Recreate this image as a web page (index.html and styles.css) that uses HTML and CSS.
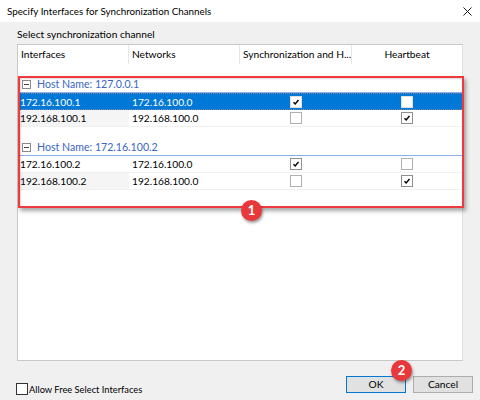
FILE: index.html
```html
<!DOCTYPE html>
<html>
<head>
<meta charset="utf-8">
<link rel="stylesheet" href="styles.css">
</head>
<body>
<div class="titlebar">
  <span class="title">Specify Interfaces for Synchronization Channels</span>
  <svg class="close" viewBox="0 0 9 9" width="9" height="9"><path d="M0.5 0.5L8.5 8.5M8.5 0.5L0.5 8.5" stroke="#222" stroke-width="1" fill="none"/></svg>
</div>
<div class="content">
  <div class="label">Select synchronization channel</div>
  <div class="list">
    <div class="header">
      <div class="hcell">Interfaces</div>
      <div class="hcell">Networks</div>
      <div class="hcell">Synchronization and H...</div>
      <div class="hcell center">Heartbeat</div>
    </div>
    <div class="group">
      <div class="ghead"><span class="toggle"></span><span class="gname">Host Name: 127.0.0.1</span></div>
      <div class="row selected">
        <div class="cell">172.16.100.1</div>
        <div class="cell net">172.16.100.0</div>
        <div class="cell cb"><span class="box checked"><svg viewBox="0 0 12 12"><path d="M3 6.2L5 8.3L9 3.6" stroke="#000" stroke-width="1.7" fill="none"/></svg></span></div>
        <div class="cell cb"><span class="box"></span></div>
      </div>
      <div class="row">
        <div class="cell alt">192.168.100.1</div>
        <div class="cell net">192.168.100.0</div>
        <div class="cell cb"><span class="box"></span></div>
        <div class="cell cb"><span class="box checked"><svg viewBox="0 0 12 12"><path d="M3 6.2L5 8.3L9 3.6" stroke="#000" stroke-width="1.7" fill="none"/></svg></span></div>
      </div>
    </div>
    <div class="group">
      <div class="ghead"><span class="toggle"></span><span class="gname">Host Name: 172.16.100.2</span></div>
      <div class="row">
        <div class="cell">172.16.100.2</div>
        <div class="cell net">172.16.100.0</div>
        <div class="cell cb"><span class="box checked"><svg viewBox="0 0 12 12"><path d="M3 6.2L5 8.3L9 3.6" stroke="#000" stroke-width="1.7" fill="none"/></svg></span></div>
        <div class="cell cb"><span class="box"></span></div>
      </div>
      <div class="row">
        <div class="cell alt">192.168.100.2</div>
        <div class="cell net">192.168.100.0</div>
        <div class="cell cb"><span class="box"></span></div>
        <div class="cell cb"><span class="box checked"><svg viewBox="0 0 12 12"><path d="M3 6.2L5 8.3L9 3.6" stroke="#000" stroke-width="1.7" fill="none"/></svg></span></div>
      </div>
    </div>
  </div>
  <div class="footer">
    <label class="free"><span class="fbox"></span>Allow Free Select Interfaces</label>
    <div class="buttons">
      <button class="btn default">OK</button>
      <button class="btn">Cancel</button>
    </div>
  </div>
</div>
<div class="annot"></div>
<div class="badge b1">1</div>
<div class="badge b2">2</div>
</body>
</html>
```
FILE: styles.css
```css
* { box-sizing: border-box; }
body {
  margin: 0;
  width: 480px;
  height: 400px;
  background: #f0f0f0;
  font-family: Lato, "Noto Sans", sans-serif;
  font-size: 10.2px;
  color: #000;
  position: relative;
  overflow: hidden;
}
.titlebar {
  height: 22px;
  background: #fff;
  display: flex;
  align-items: center;
  justify-content: space-between;
  padding: 0 8px 0 7px;
}
.title { font-size: 9.8px; line-height: 14px; }
.close { display: block; }
.content { padding: 0 17px; }
.label { margin-top: 6px; height: 16px; line-height: 12px; }
.list {
  height: 317px;
  background: #fff;
  border: 1px solid #c8c8c8;
  border-right-color: #e0e0e0;
}
.header, .row {
  display: grid;
  grid-template-columns: 111px 111px 112px 1fr;
}
.header { height: 19px; }
.hcell {
  padding-left: 3px;
  line-height: 19px;
  border-right: 1px solid #e6e6e6;
  white-space: nowrap;
  overflow: hidden;
}
.hcell:last-child { border-right: none; }
.center { text-align: center; padding-left: 0; }
.group { margin-top: 12px; }
.ghead {
  height: 17px;
  display: flex;
  align-items: center;
  border-bottom: 1px solid #8eaee6;
  padding-left: 4px;
}
.toggle {
  width: 9px;
  height: 9px;
  border: 1px solid #8a8a8a;
  position: relative;
  margin-right: 6px;
  background: #fff;
}
.toggle::after {
  content: "";
  position: absolute;
  left: 1px;
  right: 1px;
  top: 3px;
  height: 1px;
  background: #444;
}
.gname { color: #3a66c4; font-size: 10.6px; }
.row {
  height: 17px;
  border-bottom: 1px solid #f0f0f0;
}
.cell {
  line-height: 16px;
  padding-left: 2px;
  white-space: nowrap;
}
.cell.net { padding-left: 3px; }
.cell.alt { background: #f5f5f5; }
.cell.cb {
  display: flex;
  align-items: center;
  justify-content: center;
  padding-left: 0;
}
.box {
  width: 12px;
  height: 12px;
  border: 1px solid #b0b0b0;
  background: #fff;
  display: block;
}
.box.checked { border-color: #8f8f8f; }
.box svg { display: block; width: 10px; height: 10px; }
.row.selected {
  background: #0078d7;
  color: #fff;
  border-top: 1px dotted #7a8aa0;
  border-bottom: 1px dotted #7a8aa0;
}
.row.selected .box { border-color: #e0e0e0; }
.footer {
  display: flex;
  justify-content: space-between;
  margin-top: 15px;
  margin-right: -10px;
}
.free {
  display: flex;
  align-items: center;
  margin-top: 7px;
  margin-left: -1px;
  font-size: 9.3px;
}
.fbox {
  width: 12px;
  height: 12px;
  border: 1px solid #333;
  background: #fff;
  margin-right: 1px;
}
.buttons { display: flex; gap: 7px; }
.btn {
  width: 60px;
  height: 17px;
  padding: 0;
  font-family: inherit;
  font-size: 10.2px;
  background: #e1e1e1;
  border: 1px solid #adadad;
  color: #000;
  line-height: 15px;
}
.btn.default { border-color: #0078d7; }
.annot {
  position: absolute;
  left: 18px;
  top: 76px;
  width: 446px;
  height: 132px;
  border: 2px solid #ee3a3e;
  box-shadow: 2px 3px 4px rgba(0,0,0,0.35), inset 1px 1px 2px rgba(0,0,0,0.15);
}
.badge {
  position: absolute;
  width: 21px;
  height: 21px;
  border-radius: 50%;
  background: #e8383c;
  color: #fff;
  font-weight: bold;
  font-size: 13px;
  line-height: 21px;
  text-align: center;
  box-shadow: 1px 2px 3px rgba(0,0,0,0.4);
}
.b1 { left: 241px; top: 200px; }
.b2 { left: 391px; top: 360px; }
```
